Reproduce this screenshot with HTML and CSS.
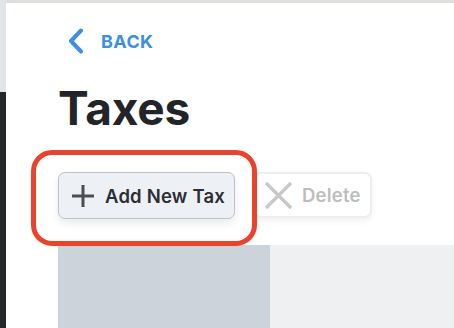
FILE: index.html
```html
<!DOCTYPE html>
<html lang="en">
<head>
<meta charset="utf-8">
<title>Taxes</title>
<link rel="stylesheet" href="styles.css">
</head>
<body>
<div class="sidebar">
  <div class="sb-top"></div>
  <div class="sb-bottom"></div>
</div>
<main class="main">
  <a class="back" href="#">
    <svg class="chev" width="16" height="26" viewBox="0 0 16 26"><polyline points="13,2.5 3,13 13,23.5" fill="none" stroke="#3d8fe3" stroke-width="4" stroke-linecap="round" stroke-linejoin="round"/></svg>
    <span>BACK</span>
  </a>
  <h1 class="title">Taxes</h1>
  <div class="toolbar">
    <button class="btn btn-add" type="button">
      <svg width="22" height="22" viewBox="0 0 22 22"><path d="M11 0V22M0 11H22" stroke="#4b4e53" stroke-width="3"/></svg>
      <span>Add New Tax</span>
    </button>
    <button class="btn btn-delete" type="button">
      <svg width="29" height="29" viewBox="0 0 29 29"><path d="M2 2L27 27M27 2L2 27" stroke="#c8c8c8" stroke-width="3.2"/></svg>
      <span>Delete</span>
    </button>
    <div class="highlight"></div>
  </div>
  <div class="panel">
    <div class="panel-col"></div>
    <div class="panel-rest"></div>
  </div>
</main>
</body>
</html>
```
FILE: styles.css
```css
html, body {
  margin: 0;
  padding: 0;
}
body {
  width: 454px;
  height: 328px;
  overflow: hidden;
  display: flex;
  background: #ffffff;
  font-family: Inter, "Liberation Sans", sans-serif;
}
.sidebar {
  width: 6px;
  flex: none;
  display: flex;
  flex-direction: column;
}
.sb-top {
  height: 92px;
  background: #e1e4e9;
}
.sb-bottom {
  flex: 1;
  background: #23262b;
}
.main {
  flex: 1;
  display: flex;
  flex-direction: column;
  border-top: 3px solid #dcdde1;
  padding-left: 52px;
}
.back {
  display: flex;
  align-items: center;
  gap: 17px;
  margin-top: 25px;
  padding-left: 10px;
  height: 26px;
  color: #3d8fe3;
  text-decoration: none;
  font-weight: 700;
  font-size: 18px;
  letter-spacing: 0.4px;
}
.chev {
  display: block;
}
.title {
  margin: 26px 0 0 0;
  font-size: 46px;
  line-height: 56px;
  font-weight: 700;
  color: #222428;
  letter-spacing: -0.2px;
}
.toolbar {
  position: relative;
  display: flex;
  gap: 18px;
  margin-top: 36px;
}
.btn {
  display: flex;
  align-items: center;
  height: 47px;
  box-sizing: border-box;
  border-radius: 7px;
  font-family: Inter, "Liberation Sans", sans-serif;
  font-size: 18.5px;
  font-weight: 600;
  letter-spacing: 0.2px;
  padding: 0;
}
.btn svg {
  display: block;
  flex: none;
}
.btn-add {
  width: 177px;
  padding-left: 13px;
  gap: 11px;
  background: #edf0f5;
  border: 1px solid #bcc3cc;
  color: #2b2e33;
  box-shadow: 0 4px 8px rgba(30, 40, 60, 0.10);
}
.btn-delete {
  width: 119px;
  height: 46px;
  padding-left: 9px;
  gap: 9px;
  background: #ffffff;
  border: 2px solid #eceef1;
  color: #bdbdbd;
  box-shadow: 0 3px 6px rgba(30, 40, 60, 0.06);
}
.highlight {
  position: absolute;
  left: -27px;
  top: -22px;
  width: 226px;
  height: 96px;
  box-sizing: border-box;
  border: 5px solid #e9432b;
  border-radius: 21px;
  pointer-events: none;
}
.panel {
  flex: 1;
  display: flex;
  margin-top: 26px;
}
.panel-col {
  width: 212px;
  background: #cdd3da;
}
.panel-rest {
  flex: 1;
  background: #eff0f2;
}
```
